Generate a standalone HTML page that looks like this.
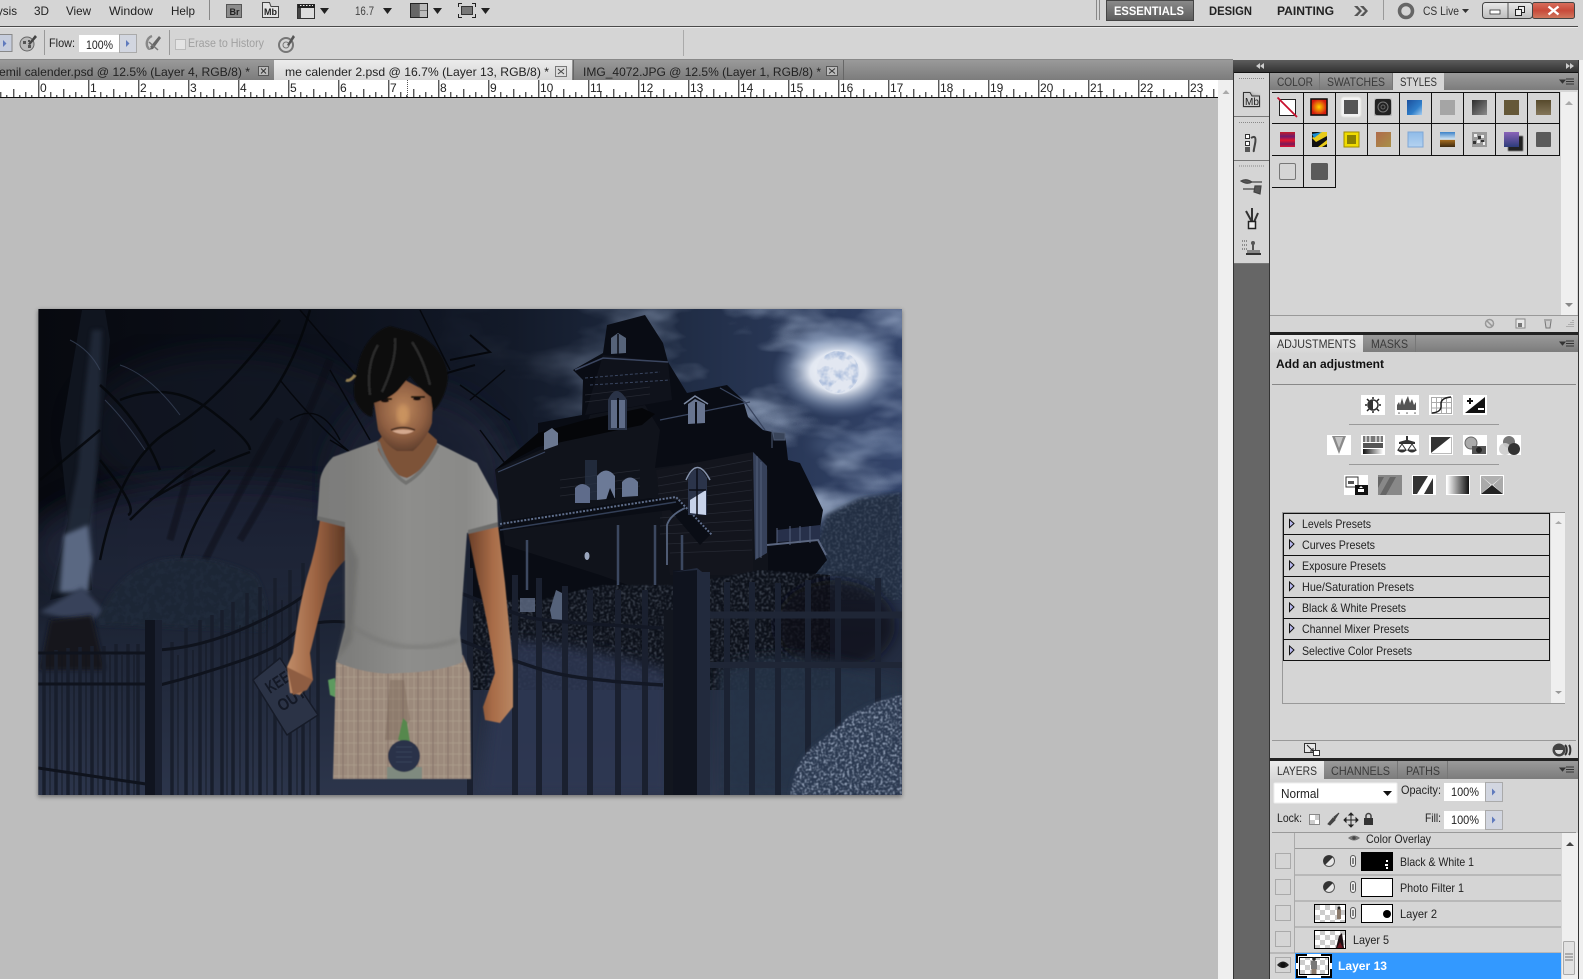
<!DOCTYPE html>
<html><head><meta charset="utf-8"><title>Photoshop</title>
<style>
html,body{margin:0;padding:0;background:#d5d5d5;overflow:hidden}
svg{display:block}
text{font-family:"Liberation Sans",sans-serif;font-size:12px;fill:#222}
.b{font-weight:bold}
.r{font-size:12px;fill:#111}
</style></head><body>
<svg width="1583" height="979" viewBox="0 0 1583 979" xmlns="http://www.w3.org/2000/svg">
<defs>
<linearGradient id="tabg" x1="0" y1="0" x2="0" y2="1"><stop offset="0" stop-color="#9a9a9a"/><stop offset="1" stop-color="#7c7c7c"/></linearGradient>
<linearGradient id="tabl" x1="0" y1="0" x2="0" y2="1"><stop offset="0" stop-color="#ececec"/><stop offset="1" stop-color="#d6d6d6"/></linearGradient>
<linearGradient id="bar" x1="0" y1="0" x2="0" y2="1"><stop offset="0" stop-color="#5c5c5c"/><stop offset="1" stop-color="#333"/></linearGradient>
<linearGradient id="ess" x1="0" y1="0" x2="0" y2="1"><stop offset="0" stop-color="#8a8a8a"/><stop offset="1" stop-color="#5c5c5c"/></linearGradient>
<linearGradient id="win" x1="0" y1="0" x2="0" y2="1"><stop offset="0" stop-color="#e9e9e9"/><stop offset="1" stop-color="#bdbdbd"/></linearGradient>
<linearGradient id="red" x1="0" y1="0" x2="0" y2="1"><stop offset="0" stop-color="#d8705e"/><stop offset=".5" stop-color="#c84a3a"/><stop offset="1" stop-color="#d07a60"/></linearGradient>
<linearGradient id="gh" x1="0" y1="0" x2="1" y2="0"><stop offset="0" stop-color="#fff"/><stop offset="1" stop-color="#111"/></linearGradient>
<pattern id="rul" x="38.3" y="80" width="50" height="18" patternUnits="userSpaceOnUse">
<path d="M.5 0V18M25.5 9V18M12.5 12V18M37.5 12V18M6.5 15V18M18.5 15V18M31.5 15V18M43.5 15V18" stroke="#111" stroke-width="1" fill="none"/>
</pattern>
<pattern id="chk" width="10" height="10" patternUnits="userSpaceOnUse"><rect width="10" height="10" fill="#fff"/><rect width="5" height="5" fill="#ccc"/><rect x="5" y="5" width="5" height="5" fill="#ccc"/></pattern>
<pattern id="plaid" width="15" height="22" patternUnits="userSpaceOnUse"><rect width="15" height="22" fill="#9c8a7b"/><path d="M3 0V22M9 0V22" stroke="#a99889" stroke-width="1"/><path d="M0 6H15M0 17H15" stroke="#b3a395" stroke-width=".8" opacity=".7"/><path d="M13 0V22" stroke="#86746a" stroke-width="1"/></pattern>
<clipPath id="img"><rect x="38.4" y="309" width="863.6" height="486"/></clipPath>
<filter id="clouds" x="0" y="0" width="100%" height="100%"><feTurbulence type="fractalNoise" baseFrequency="0.009 0.02" numOctaves="4" seed="7"/><feColorMatrix values="0 0 0 0 .44  0 0 0 0 .54  0 0 0 0 .72  2.2 0 0 0 -.92"/></filter>
<filter id="fol" x="0" y="0" width="100%" height="100%"><feTurbulence type="fractalNoise" baseFrequency="0.42" numOctaves="2" seed="4"/><feColorMatrix values="0 0 0 0 .55  0 0 0 0 .64  0 0 0 0 .8  4 0 0 0 -1.9"/><feComposite in2="SourceAlpha" operator="in"/><feGaussianBlur stdDeviation=".4"/></filter>
<filter id="foldk" x="0" y="0" width="100%" height="100%"><feTurbulence type="fractalNoise" baseFrequency="0.16" numOctaves="3" seed="9"/><feColorMatrix values="0 0 0 0 .02  0 0 0 0 .03  0 0 0 0 .06  5 0 0 0 -2.2"/><feComposite in2="SourceAlpha" operator="in"/></filter>
<filter id="moon" x="0" y="0" width="100%" height="100%"><feTurbulence type="fractalNoise" baseFrequency="0.1" numOctaves="3" seed="2"/><feColorMatrix values="0 0 0 0 .42  0 0 0 0 .52  0 0 0 0 .72  3.4 0 0 0 -1.5"/><feComposite in2="SourceAlpha" operator="in"/></filter>
<filter id="b2"><feGaussianBlur stdDeviation="2"/></filter>
<filter id="b6"><feGaussianBlur stdDeviation="6"/></filter>
<filter id="b14"><feGaussianBlur stdDeviation="14"/></filter>
<filter id="b05"><feGaussianBlur stdDeviation=".6"/></filter>
<filter id="sd" x="-5%" y="-5%" width="110%" height="110%"><feDropShadow dx="0" dy="1" stdDeviation="2" flood-color="#000" flood-opacity=".45"/></filter>
<linearGradient id="sky" x1="0" y1="0" x2="1" y2="0"><stop offset="0" stop-color="#07090f"/><stop offset=".3" stop-color="#0c101a"/><stop offset=".55" stop-color="#131a29"/><stop offset=".72" stop-color="#1e2a41"/><stop offset="1" stop-color="#33446a"/></linearGradient>
<linearGradient id="low" x1="0" y1="0" x2="0" y2="1"><stop offset="0" stop-color="#242c3e" stop-opacity="0"/><stop offset=".45" stop-color="#20283a" stop-opacity=".9"/><stop offset="1" stop-color="#2c354b"/></linearGradient>
<linearGradient id="fadeL" x1="0" y1="0" x2="1" y2="0"><stop offset="0" stop-color="#000"/><stop offset=".25" stop-color="#333"/><stop offset=".7" stop-color="#fff"/></linearGradient>
<mask id="mskCl"><rect x="420" y="309" width="482" height="260" fill="url(#fadeL)"/></mask>
<radialGradient id="halo"><stop offset="0" stop-color="#fff"/><stop offset=".42" stop-color="#e8edf6" stop-opacity=".95"/><stop offset=".7" stop-color="#9fb0cc" stop-opacity=".55"/><stop offset="1" stop-color="#5d7299" stop-opacity="0"/></radialGradient>
<linearGradient id="shirt" x1="0" y1="0" x2="1" y2="0"><stop offset="0" stop-color="#7c7c7a"/><stop offset=".18" stop-color="#7e7e7c"/><stop offset=".5" stop-color="#8e8e8c"/><stop offset=".82" stop-color="#8a8a88"/><stop offset="1" stop-color="#9a9a98"/></linearGradient>
<linearGradient id="armL" x1="0" y1="0" x2="1" y2="0"><stop offset="0" stop-color="#c08c68"/><stop offset=".5" stop-color="#9c6342"/><stop offset="1" stop-color="#5e3925"/></linearGradient>
<linearGradient id="armR" x1="0" y1="0" x2="1" y2="0"><stop offset="0" stop-color="#6a3f28"/><stop offset=".55" stop-color="#a86c48"/><stop offset="1" stop-color="#b98662"/></linearGradient>
<radialGradient id="face" cx=".5" cy=".42" r=".62"><stop offset="0" stop-color="#bd875c"/><stop offset=".6" stop-color="#8f5f42"/><stop offset="1" stop-color="#5a3b2a"/></radialGradient>
</defs>

<!-- chrome -->
<rect width="1583" height="979" fill="#d5d5d5"/>
<rect x="0" y="98" width="1218" height="881" fill="#bdbdbd"/>
<rect x="0" y="26" width="1578" height="1" fill="#4a4a4a"/>
<rect x="0" y="27" width="1578" height="1" fill="#ececec"/>
<rect x="0" y="59" width="1233" height="1" fill="#888"/>

<!-- menu -->
<text x="-3" y="15" textLength="20" lengthAdjust="spacingAndGlyphs">ysis</text>
<text x="34" y="15" textLength="15" lengthAdjust="spacingAndGlyphs">3D</text>
<text x="66" y="15" textLength="25" lengthAdjust="spacingAndGlyphs">View</text>
<text x="109" y="15" textLength="44" lengthAdjust="spacingAndGlyphs">Window</text>
<text x="171" y="15" textLength="24" lengthAdjust="spacingAndGlyphs">Help</text>
<rect x="209" y="0" width="1" height="20" fill="#888"/>
<rect x="226.500" y="4.500" width="15" height="13" fill="#8c8c8c" stroke="#555"/><text x="229.500" y="15" style="font-size:9px;font-weight:bold">Br</text>
<path d="M262.500 4.500V17.500H278.500V6.500H271L269.500 2.500H262.500Z" fill="#e3e3e3" stroke="#444"/><text x="264" y="15" style="font-size:9px;font-weight:bold">Mb</text>
<rect x="297.500" y="4.500" width="17" height="14" fill="#ddd" stroke="#333"/><rect x="298" y="4" width="17" height="4" fill="#222"/><path d="M300 5.500H313" stroke="#eee" stroke-dasharray="1.500 1.500"/><rect x="298" y="8" width="3" height="10" fill="#444"/>
<path d="M320 8H329L324.500 14Z" fill="#222"/>
<text x="355" y="15" textLength="19" lengthAdjust="spacingAndGlyphs" style="fill:#444">16.7</text>
<path d="M383 8H392L387.500 14Z" fill="#222"/>
<rect x="410.500" y="3.500" width="17" height="14" fill="#777" stroke="#222"/><rect x="420" y="4" width="7" height="6" fill="#bbb"/><rect x="420" y="11" width="7" height="6" fill="#bbb"/><rect x="411" y="4" width="8" height="13" fill="#666"/>
<path d="M433 8H442L437.500 14Z" fill="#222"/>
<path d="M458.500 7V3.500H462M472 3.500H475.500V7M458.500 14V17.500H462M472 17.500H475.500V14" stroke="#222" fill="none"/>
<rect x="461.500" y="6.500" width="11" height="8" fill="#777" stroke="#333"/>
<path d="M481 8H490L485.500 14Z" fill="#222"/>

<path d="M1096.500 0V20M1099.500 0V20" stroke="#888" stroke-width="1"/>
<rect x="1106.500" y=".5" width="87" height="20" fill="url(#ess)" stroke="#444"/>
<text class="b" x="1114" y="15" textLength="70" lengthAdjust="spacingAndGlyphs" style="fill:#fff">ESSENTIALS</text>
<text class="b" x="1209" y="15" textLength="43" lengthAdjust="spacingAndGlyphs">DESIGN</text>
<text class="b" x="1277" y="15" textLength="57" lengthAdjust="spacingAndGlyphs">PAINTING</text>
<path d="M1354 6L1359 11L1354 16H1357.500L1362 11L1357.500 6ZM1360 6L1365 11L1360 16H1363.500L1368 11L1363.500 6Z" fill="#555"/>
<rect x="1383" y="0" width="1" height="20" fill="#999"/>
<circle cx="1406" cy="11" r="6.500" fill="none" stroke="#666" stroke-width="3.500"/>
<text x="1423" y="15" textLength="36" lengthAdjust="spacingAndGlyphs" style="fill:#333">CS Live</text>
<path d="M1462 9H1469L1465.500 13Z" fill="#333"/>
<rect x="1482.500" y="2.500" width="50" height="16" rx="3" fill="url(#win)" stroke="#444"/>
<path d="M1508 3V18" stroke="#555"/>
<rect x="1532.500" y="2.500" width="42" height="16" rx="2" fill="url(#red)" stroke="#444"/>
<rect x="1490" y="10" width="10" height="4" fill="#fff" stroke="#333" stroke-width=".8"/>
<path d="M1515.500 9.500H1521.500V15.500H1515.500ZM1518.500 9V6.500H1524.500V12.500H1522" fill="#eee" stroke="#222"/>
<path d="M1548.500 6.500L1553.500 10.500L1558.500 6.500M1548.500 14.500L1553.500 10.500L1558.500 14.500" stroke="#fff" stroke-width="2.400" fill="none"/>

<!-- options bar -->
<rect x="-2" y="34.500" width="14" height="17" fill="#c6cddd" stroke="#888"/>
<path d="M3 40L6.500 43.500L3 47Z" fill="#5f7abd"/>
<circle cx="27" cy="44" r="7" fill="#bbb" stroke="#666"/><path d="M23 41h3v3h-3zM28 45h3v3h-3zM28 40h2v2h-2z" fill="#555"/>
<path d="M28 44L35 35L37 37L30 45Z" fill="#444"/>
<rect x="44" y="30" width="1" height="25" fill="#999"/>
<text x="49" y="47" textLength="26" lengthAdjust="spacingAndGlyphs">Flow:</text>
<rect x="79" y="35" width="40" height="17" fill="#fff"/><rect x="119.500" y="34.500" width="17" height="18" fill="#d2d6e0" stroke="#aaa"/>
<path d="M126 40L129.500 43.500L126 47Z" fill="#5f7abd"/>
<text x="86" y="49" textLength="27" lengthAdjust="spacingAndGlyphs">100%</text>
<path d="M152 36a8 8 0 0 0 -3 13" stroke="#888" stroke-width="2.500" fill="none"/>
<path d="M150 47L159 36L161 38L153 49ZM148 50L152 47L153 49Z" fill="#666"/><path d="M149 42L158 50" stroke="#777" stroke-width="1.500"/>
<rect x="169" y="30" width="1" height="25" fill="#999"/>
<rect x="175.500" y="39.500" width="10" height="10" fill="#e4e4e4" stroke="#bbb"/>
<text x="188" y="47" textLength="76" lengthAdjust="spacingAndGlyphs" style="fill:#a0a0a0">Erase to History</text>
<circle cx="286" cy="45" r="7" fill="none" stroke="#777" stroke-width="2"/><circle cx="286" cy="45" r="3" fill="none" stroke="#777"/>
<path d="M287 45L293 35L295 37L289 46Z" fill="#555"/>
<rect x="683" y="30" width="1" height="26" fill="#aaa"/>

<!-- doc tabs -->
<rect x="0" y="60" width="1233" height="20" fill="url(#tabg)"/>
<rect x="274" y="60" width="298" height="20" fill="url(#tabl)"/>
<rect x="573" y="60" width="1" height="20" fill="#666"/>
<rect x="843" y="60" width="1" height="20" fill="#666"/>
<text x="-1" y="76" textLength="251" lengthAdjust="spacingAndGlyphs">emil calender.psd @ 12.5% (Layer 4, RGB/8) *</text>
<rect x="258.500" y="66.500" width="10" height="9" fill="#bbb" stroke="#555"/><path d="M261 68.500L266 73.500M266 68.500L261 73.500" stroke="#333"/>
<text x="285" y="76" textLength="264" lengthAdjust="spacingAndGlyphs">me calender 2.psd @ 16.7% (Layer 13, RGB/8) *</text>
<rect x="555.500" y="66.500" width="11" height="10" fill="#ddd" stroke="#777"/><path d="M558 69L564 74M564 69L558 74" stroke="#444"/>
<text x="583" y="76" textLength="238" lengthAdjust="spacingAndGlyphs">IMG_4072.JPG @ 12.5% (Layer 1, RGB/8) *</text>
<rect x="826.500" y="66.500" width="11" height="9" fill="#bbb" stroke="#555"/><path d="M829 68.500L835 73.500M835 68.500L829 73.500" stroke="#333"/>

<!-- ruler -->
<rect x="0" y="80" width="1218" height="18" fill="#fff"/>
<rect x="0" y="80" width="1218" height="18" fill="url(#rul)"/>
<rect x="0" y="97" width="1218" height="1" fill="#111"/>
<path d="M407.500 80V97" stroke="#555" stroke-dasharray="1 1"/>
<g class="r">
<text x="40" y="92">0</text><text x="90" y="92">1</text><text x="140" y="92">2</text><text x="190" y="92">3</text><text x="240" y="92">4</text><text x="290" y="92">5</text><text x="340" y="92">6</text><text x="390" y="92">7</text><text x="440" y="92">8</text><text x="490" y="92">9</text><text x="540" y="92">10</text><text x="590" y="92">11</text><text x="640" y="92">12</text><text x="690" y="92">13</text><text x="740" y="92">14</text><text x="790" y="92">15</text><text x="840" y="92">16</text><text x="890" y="92">17</text><text x="940" y="92">18</text><text x="990" y="92">19</text><text x="1040" y="92">20</text><text x="1090" y="92">21</text><text x="1140" y="92">22</text><text x="1190" y="92">23</text>
</g>

<!-- canvas scrollbar + doc shadow -->
<rect x="1218" y="80" width="15" height="899" fill="#efefef"/>
<path d="M1222.500 94L1226 90L1229.500 94Z" fill="#aaa"/>
<rect x="38" y="310" width="864" height="487" fill="#000" opacity=".4" filter="url(#b2)"/>

<!-- IMAGE -->
<g clip-path="url(#img)">
<rect x="38" y="309" width="864" height="486" fill="url(#sky)"/>
<rect x="420" y="309" width="482" height="260" filter="url(#clouds)" mask="url(#mskCl)"/>
<ellipse cx="838" cy="372" rx="66" ry="46" fill="url(#halo)"/>
<circle cx="838" cy="372" r="22" fill="#e2e7f1" filter="url(#b05)"/>
<circle cx="838" cy="372" r="21" fill="#fff" filter="url(#moon)"/>
<ellipse cx="880" cy="445" rx="70" ry="12" fill="#6a7fa3" opacity=".3" filter="url(#b6)"/>
<ellipse cx="230" cy="430" rx="150" ry="80" fill="#161d2c" opacity=".55" filter="url(#b14)"/>
<ellipse cx="230" cy="550" rx="200" ry="70" fill="#1c2434" opacity=".9" filter="url(#b14)"/>
<ellipse cx="420" cy="480" rx="90" ry="90" fill="#1c2434" opacity=".7" filter="url(#b14)"/>
<rect x="38" y="500" width="864" height="295" fill="url(#low)"/>

<!-- bare bushes right -->
<path d="M805 585L826 515L860 498L902 492V600H805Z" fill="#222d42" filter="url(#b2)"/>
<path d="M805 585L826 515L860 498L902 492V600H805Z" fill="#fff" filter="url(#fol)" opacity=".18"/>

<!-- trees -->
<path d="M105 310L110 340L98 470L88 533L92 590L50 600L68 520L60 440L82 310Z" fill="#10151f"/>
<path d="M92 330L84 400L78 470L64 540L52 592L78 595L93 560L92 520L96 470L100 400L102 330Z" fill="#2b3447" opacity=".6" filter="url(#b2)"/>
<path d="M60 592L64 535L88 525L92 560L88 592Z" fill="#5a6882" filter="url(#b2)"/>
<path d="M40 612L82 587L105 612L90 622L60 617Z" fill="#37425a" filter="url(#b2)"/>
<path d="M50 620L40 670H105L92 615Z" fill="#12161f" filter="url(#b2)"/>
<path d="M100 560Q120 460 170 430T280 320M120 400Q170 380 210 410T250 450M100 385Q140 420 160 470M230 470Q180 530 170 610M250 420Q290 380 310 310M150 500Q200 470 250 452M40 480L100 430M100 460Q140 510 128 515M215 450Q170 480 130 520" stroke="#05070b" stroke-width="2.500" fill="none" opacity=".85"/>
<path d="M280 420Q250 470 205 560M330 360Q300 440 240 540M190 470L170 540" stroke="#080b12" stroke-width="7" fill="none" opacity=".5" filter="url(#b05)"/>
<path d="M105 400Q125 420 145 450M120 365Q150 375 180 415M70 340Q90 350 100 370" stroke="#3d4860" stroke-width="1" fill="none" opacity=".7"/>
<path d="M280 380Q320 430 360 460M290 420Q320 400 340 440M330 370L370 440M300 310L360 380M330 440L380 470M420 310L450 370M460 385L510 420M505 370L470 400M480 430L510 470" stroke="#05070c" stroke-width="1.400" fill="none"/>
<path d="M440 375L475 365M470 335L490 352L450 360" stroke="#05070c" stroke-width="2" fill="none"/>

<!-- bush left -->
<path d="M97 625Q110 575 160 560Q210 552 255 575Q270 600 265 630Z" fill="#1e2636" filter="url(#b2)"/>
<path d="M97 625Q110 575 160 560Q210 552 255 575Q270 600 265 630Z" fill="#fff" filter="url(#foldk)" opacity=".35"/>

<!-- house -->
<path d="M495 470L538 433L538 423L582 415L583 380L573 370L603 353L607 325L645 315L663 343L668 362L687 393L727 385L743 400L748 417L763 430L772 432L785 433L788 460L800 463L823 510L818 540L827 560L813 577L800 690H470V540L505 525L500 490Z" fill="#090c14"/>
<path d="M603 355L668 362L672 400L585 415Z" fill="#0f121b"/>
<path d="M495 470L585 430L590 415L645 405L660 430L655 468L730 458L753 452L768 470L768 600L670 600L600 575L505 545Z" fill="#10131b"/>
<path d="M656 470L753 452V575H670Z" fill="#13151d"/>
<g stroke="#262933" stroke-width=".8" fill="none"><path d="M658 478L752 460M658 486L752 470M658 494L752 480M658 502L752 490M660 510L752 500M660 518L752 510M660 526L752 520M660 534L752 530M666 544L752 540M670 553L752 550M560 480L640 470M560 488L640 478M560 496L640 486M585 395L650 387M585 402L650 394"/></g>
<path d="M753 452L767 466V553L755 560Z" fill="#36415a"/>
<path d="M757 456V558M761 462V558" stroke="#5a6883" stroke-width=".8"/>
<path d="M495 470L538 447L642 425L655 414L642 408L585 420L538 433Z" fill="#050609"/>
<path d="M575 370L603 358L668 362" stroke="#3b4660" stroke-width="1.500" fill="none"/>
<path d="M498 472L545 452M660 420L750 402M720 388L745 402L765 430" stroke="#39455f" stroke-width="1.200" fill="none"/>
<path d="M585 378L660 372M590 385L670 380" stroke="#39455f" stroke-width="1" stroke-dasharray="3 2" fill="none"/>
<path d="M510 520L650 498L680 500L712 533L700 545L670 510L510 530Z" fill="#0a0d15"/>
<path d="M500 524L676 497L712 535" stroke="#5f6e8b" stroke-width="2" stroke-dasharray="2 1.500" fill="none"/>
<path d="M500 530L676 502" stroke="#333f57" stroke-width="1.500" fill="none"/>
<path d="M667 565V525Q670 515 685 508" stroke="#55637d" stroke-width="1.800" fill="none"/>
<path d="M527 540V590M618 525V590M655 525V590M682 535V570M480 545V585" stroke="#3c4860" stroke-width="2.500"/>
<rect x="585" y="460" width="12" height="40" fill="#2a3449" opacity=".7"/>
<!-- windows -->
<path d="M688 515V478Q697 460 707 478V515Z" fill="#2b344a"/><path d="M690 513V500L706 490V515Z" fill="#c8d3ea"/><path d="M697 468V515M689 490H706" stroke="#0a0d16" stroke-width="1.500"/><path d="M686 480Q697 455 710 480" stroke="#8693ad" stroke-width="1.500" fill="none"/>
<path d="M608 430V400Q616 382 627 400V430Z" fill="#2a3347"/><path d="M611 428V400H625V428Z" fill="#5f6c88"/><path d="M618 398V428" stroke="#0a0d16" stroke-width="2"/>
<path d="M688 424V404L695 399L705 404V423Z" fill="#687590"/><path d="M696 402V424" stroke="#0a0d16" stroke-width="2"/><path d="M684 404L695 396L708 404" stroke="#7d8aa2" stroke-width="1.500" fill="none"/>
<path d="M611 354V338L618 333L626 338V353Z" fill="#566379"/><path d="M618 334V354" stroke="#0a0d16" stroke-width="1.500"/>
<path d="M544 450V433L552 428L558 433V445Z" fill="#6b7891"/>
<path d="M575 503V488Q582 480 590 488V503Z" fill="#5f6c8b"/><path d="M597 500V476Q606 465 615 476V498Z" fill="#6c7a97"/><path d="M622 497V482Q630 473 638 482V496Z" fill="#687693"/>
<path d="M606 500L610 488L615 499Z" fill="#0a0d16"/>
<path d="M777 530L820 525V540L777 542Z" fill="#27304a"/><path d="M777 528V545M790 526V545M800 526V543M810 526V543" stroke="#56627e" stroke-width="1"/><path d="M767 545L818 540L826 555" stroke="#5a6680" stroke-width="2" fill="none"/>
<path d="M785 440H774L773 432L785 433ZM772 448V430" stroke="#4d5a73" stroke-width="1" fill="#394459"/>
<ellipse cx="587" cy="556" rx="2.500" ry="4" fill="#9aa6bd"/>
<!-- house-level foliage -->
<path d="M470 600L540 600L600 585L680 585L760 570L830 575L830 690H470Z" fill="#0c1019"/>
<path d="M470 600L540 600L600 585L680 585L760 570L830 575L830 690H470Z" fill="#fff" filter="url(#fol)" opacity=".28"/>
<path d="M550 610L556 590L566 595L562 620H552Z" fill="#55627a"/>
<path d="M520 598H535V612H520Z" fill="#5f6c85" opacity=".8"/>
<path d="M500 640Q560 640 670 670V795H480Z" fill="#2d3953" opacity=".85" filter="url(#b6)"/>
<ellipse cx="835" cy="625" rx="60" ry="45" fill="#0b0f18" opacity=".7" filter="url(#b6)"/>
<path d="M720 670Q780 640 902 680V795H720Z" fill="#283449" opacity=".85" filter="url(#b6)"/>
<path d="M720 670H902V795H720Z" fill="#fff" filter="url(#foldk)" opacity=".28"/>

<!-- fence -->
<g fill="none" stroke="#181e2c">
<path stroke-width="3.500" d="M44 652V795M56 650V795M68 648V795M80 647V795M92 646V795M104 646V795M116 644V795M128 644V795M138 644V795"/>
<path stroke-width="3.500" d="M172 642V795M186 628V795M200 620V795M212 615V795M222 610V795M233 602V795M247 593V795M260 587V795M275 578V795M290 570V795M303 563V795M318 562V795"/>
<path stroke-width="1.500" stroke="#0f131d" opacity=".5" d="M50 655V795M62 655V795M74 655V795M86 655V795M98 655V795M110 655V795M122 655V795M134 655V795M178 655V795M193 650V795M206 640V795M227 635V795M240 625V795M253 620V795M267 610V795M282 600V795M297 600V795M310 600V795"/>
<path stroke-width="6" stroke="#1a202f" d="M470 568V795M515 575V795M539 578V795M565 586V795M590 590V795M618 590V795M645 590V795"/>
<path stroke-width="6" stroke="#1b2232" d="M727 582V795M752 582V795M778 583V795M808 580V795M838 578V795M878 578V795"/>
<path stroke-width="3" stroke="#0f131d" d="M38 653H146M38 684H146M38 768L146 784"/>
<path stroke-width="3" stroke="#0f131d" d="M157 650Q200 648 247 627T310 590M160 685Q200 675 243 660T300 627Q320 620 345 622"/>
<path stroke-width="3.500" stroke="#131825" d="M460 593Q510 612 527 617T663 628"/>
<path stroke-width="3.500" stroke="#131825" d="M460 640Q510 660 543 670T663 685"/>
<path stroke-width="7" stroke="#1f2636" d="M705 615H902"/>
<path stroke-width="6" stroke="#1f2636" d="M705 665H902"/>
</g>
<rect x="145" y="620" width="17" height="175" fill="#10141f"/><rect x="155" y="620" width="7" height="175" fill="#1a2030"/>
<rect x="664" y="610" width="10" height="185" fill="#12161f"/>
<rect x="673" y="570" width="24" height="225" fill="#0f131e"/><path d="M673 572L697 568L710 578V795H697V570" fill="#232b3e"/><rect x="697" y="572" width="13" height="223" fill="#222a3d"/>

<!-- sign -->
<path d="M280 658L253 680L287 735L318 715Z" fill="#2b3346" stroke="#161b28" stroke-width="1.500" stroke-linejoin="round"/>
<text transform="translate(270 694) rotate(-33)" textLength="34" lengthAdjust="spacingAndGlyphs" style="font-size:17px;font-weight:bold;fill:#141926">KEEP</text>
<text transform="translate(282 712) rotate(-33)" textLength="30" lengthAdjust="spacingAndGlyphs" style="font-size:17px;font-weight:bold;fill:#141926">OUT</text>

<!-- bottom right bush -->
<path d="M790 795Q795 760 815 745T850 715Q875 700 902 695V795Z" fill="#2c3950" filter="url(#b2)"/>
<path d="M790 795Q795 760 815 745T850 715Q875 700 902 695V795Z" fill="#fff" filter="url(#fol)" opacity=".7"/>

<!-- MAN -->
<g filter="url(#b05)">
<path d="M328 680L335 678L337 698L330 695Z" fill="#5d9a5e"/>
<path d="M336 660L463 655L470 673L471 779H333Z" fill="url(#plaid)"/>
<path d="M390 680L404 680L410 720L398 740H385Z" fill="#6d5b4d" opacity=".3"/>
<path d="M398 740L403 718L407 722L410 742Z" fill="#57884e"/>
<path d="M387 767H422V779H387Z" fill="#7f8a7f"/>
<circle cx="404" cy="756" r="16" fill="#2a3348"/>
<path d="M396 747H412M396 752H412M396 757H412M396 762H412" stroke="#3c475d" stroke-width=".7"/>
<!-- arms -->
<path d="M320 520L345 527L345 560Q335 570 328 583Q318 620 310 653L313 680L300 695L290 693L287 667L293 653Q298 610 307 577Q316 550 320 520Z" fill="url(#armL)"/>
<path d="M468 532L498 525L505 583L513 667L513 707L500 723L485 720L483 707L495 673Q488 620 477 577Z" fill="url(#armR)"/>
<path d="M287 667L313 680L307 690L293 695Z" fill="#8e5d42"/>
<!-- shirt -->
<path d="M380 440L333 457Q322 468 320 480L317 520L345 527L345 560V627L336 662Q370 676 400 673Q440 672 463 662L460 633L467 533L498 527L497 500L477 463L437 443Q420 470 407 475Q390 468 380 440Z" fill="url(#shirt)"/>
<path d="M345 530V625L337 660L352 640L358 560Z" fill="#636362" opacity=".5" filter="url(#b2)"/>
<path d="M317 516L345 522V527L317 520ZM468 530L498 522V527L468 534Z" fill="#6c6c6a"/>
<path d="M350 625Q400 660 458 640" stroke="#777775" stroke-width="3" fill="none" filter="url(#b2)"/>
<!-- neck -->
<path d="M378 441L378 450Q390 475 407 478Q425 470 437 447L437 440L420 425H392Z" fill="#7d5239"/>
<path d="M378 442Q388 472 406 483Q425 472 438 445" stroke="#727270" stroke-width="3.500" fill="none"/>
<!-- face -->
<path d="M373 395L378 430Q385 445 397 451L413 451Q426 440 432 423L433 395L405 380Z" fill="url(#face)"/>
<ellipse cx="403" cy="415" rx="6" ry="10" fill="#c9935f" filter="url(#b2)"/>
<path d="M379 399L392 399M411 397L425 397" stroke="#1a1210" stroke-width="2"/>
<ellipse cx="385" cy="401" rx="4" ry="1.500" fill="#15100d"/><ellipse cx="417" cy="399" rx="4" ry="1.500" fill="#15100d"/>
<path d="M392 431Q403 428 414 431Q404 437 392 431Z" fill="#d4a98e"/><path d="M391 430Q403 425 415 430" stroke="#3a251c" stroke-width="1.400" fill="none"/>
<!-- hair -->
<path d="M390 326C375 330 362 345 358 365C354 380 352 395 356 402C360 410 366 416 372 417L374 403C380 401 392 398 400 388C405 382 408 378 410 376C416 384 424 392 431 397L433 412C440 405 447 392 448 377C447 360 437 342 412 332Z" fill="#0d0d0d"/>
<path d="M378 345Q366 365 370 395M395 338Q397 360 382 392M412 342Q424 360 430 385" stroke="#2e2e2e" stroke-width="2.500" fill="none" filter="url(#b05)"/>
<path d="M355 375Q350 382 346 380" stroke="#8f7c50" stroke-width="3"/>
</g>
</g>

<!-- PANELS -->
<rect x="1233" y="60" width="345" height="12" fill="url(#bar)"/>
<path d="M1264 63V69L1260 66ZM1260 63V69L1256 66Z" fill="#ccc"/>
<path d="M1570 63V69L1574 66ZM1566 63V69L1570 66Z" fill="#ccc"/>
<rect x="1233" y="72" width="345" height="1" fill="#111"/>
<rect x="1578" y="60" width="1" height="919" fill="#333"/>
<rect x="1579" y="60" width="4" height="919" fill="#efefef"/>
<rect x="1233" y="72" width="1" height="907" fill="#333"/>
<rect x="1234" y="73" width="35" height="906" fill="#666"/>
<rect x="1234" y="73" width="35" height="43" fill="#d5d5d5"/>
<rect x="1234" y="117" width="35" height="43" fill="#d5d5d5"/>
<rect x="1234" y="161" width="35" height="102" fill="#d5d5d5"/>
<rect x="1234" y="116" width="35" height="1" fill="#777"/><rect x="1234" y="160" width="35" height="1" fill="#777"/><rect x="1234" y="263" width="35" height="1" fill="#777"/>
<path d="M1239 78.500H1264M1239 122.500H1264M1239 166H1264" stroke="#888" stroke-dasharray="1 1"/>
<!-- dock icons -->
<path d="M1243.500 92.500V106.500H1259.500V96H1252L1250 92.500Z" fill="#ccc" stroke="#333" filter="url(#sd)"/><text x="1245" y="105" style="font-size:10px">Mb</text>
<rect x="1245.500" y="134.500" width="4" height="4" fill="#fff" stroke="#333"/><rect x="1245.500" y="141.500" width="4" height="4" fill="#fff" stroke="#333"/><rect x="1245" y="147" width="5" height="5" fill="#555"/>
<path d="M1251 138Q1257 134 1255 144T1254 150" stroke="#444" stroke-width="2" fill="none"/>
<path d="M1241 181Q1246 178 1252 182Q1247 185 1241 181ZM1252 182H1262M1243 189H1254M1255 186L1261 186L1260 194L1254 192Z" stroke="#444" stroke-width="1.200" fill="#555"/>
<path d="M1246 211L1252 222M1252 208V222M1258 213L1254 222" stroke="#333" stroke-width="2"/><rect x="1248.500" y="221.500" width="7" height="7" fill="#eee" stroke="#222" stroke-width="1.500"/>
<path d="M1242 241H1248M1242 245H1248M1242 249H1248" stroke="#444" stroke-dasharray="1 1"/><circle cx="1253" cy="243" r="2" fill="#555"/><rect x="1252" y="244" width="2" height="6" fill="#555"/><rect x="1247" y="250" width="13" height="3" fill="#888"/><rect x="1246" y="253" width="15" height="2" fill="#333"/>

<!-- panel 1 -->
<rect x="1270" y="73" width="308" height="259" fill="#d5d5d5"/>
<rect x="1269" y="73" width="1" height="906" fill="#333"/>
<rect x="1270" y="73" width="308" height="17" fill="url(#tabg)"/>
<rect x="1319" y="73" width="1" height="17" fill="#777"/><rect x="1392" y="73" width="1" height="17" fill="#777"/>
<rect x="1393" y="73" width="51" height="18" fill="#d5d5d5"/>
<text x="1277" y="86" textLength="36" lengthAdjust="spacingAndGlyphs" style="fill:#3a3a3a">COLOR</text>
<text x="1327" y="86" textLength="58" lengthAdjust="spacingAndGlyphs" style="fill:#3a3a3a">SWATCHES</text>
<text x="1400" y="86" textLength="37" lengthAdjust="spacingAndGlyphs" style="fill:#333">STYLES</text>
<path d="M1560 80H1565L1562.500 83ZM1566 79H1574M1566 81.500H1574M1566 84H1574" fill="#333" stroke="#333"/>
<!-- style grid -->
<path d="M1272 92.500H1560M1272 123.500H1560M1272 155.500H1560M1272 187.500H1336" stroke="#111" fill="none"/>
<path d="M1303.500 92V187M1335.500 92V187M1367.500 92V155M1399.500 92V155M1431.500 92V155M1463.500 92V155M1495.500 92V155M1527.500 92V155M1559.500 92V155" stroke="#111" fill="none"/>
<rect x="1279.500" y="99.500" width="16" height="16" fill="#fff" stroke="#222"/><path d="M1277.500 97.500L1297 117" stroke="#c8102e" stroke-width="1.800"/>
<defs><radialGradient id="fire"><stop offset="0" stop-color="#ffd400"/><stop offset="1" stop-color="#d41a0c"/></radialGradient>
<linearGradient id="s5" x1="0" y1="0" x2="1" y2="1"><stop offset="0" stop-color="#1b4f9c"/><stop offset=".6" stop-color="#2f7ec9"/><stop offset="1" stop-color="#a5cdf0"/></linearGradient>
<linearGradient id="s7" x1="0" y1="0" x2="1" y2="1"><stop offset="0" stop-color="#2d2d2d"/><stop offset="1" stop-color="#8c8c8c"/></linearGradient>
<linearGradient id="s9" x1="0" y1="0" x2="0" y2="1"><stop offset="0" stop-color="#574a2c"/><stop offset="1" stop-color="#84765a"/></linearGradient>
<linearGradient id="s12" x1="0" y1="0" x2="1" y2="1"><stop offset="0" stop-color="#b06b4a"/><stop offset="1" stop-color="#a89048"/></linearGradient>
<linearGradient id="s13" x1="0" y1="0" x2="0" y2="1"><stop offset="0" stop-color="#8fbbe8"/><stop offset="1" stop-color="#b4d2f0"/></linearGradient>
<linearGradient id="s14" x1="0" y1="0" x2="0" y2="1"><stop offset="0" stop-color="#3c82c8"/><stop offset=".5" stop-color="#d8e8f4"/><stop offset=".55" stop-color="#a0691e"/><stop offset="1" stop-color="#3d2a10"/></linearGradient>
<linearGradient id="s16" x1="0" y1="0" x2="0" y2="1"><stop offset="0" stop-color="#8a63b8"/><stop offset="1" stop-color="#2d3c7a"/></linearGradient>
<linearGradient id="s10" x1="0" y1="0" x2="0" y2="1"><stop offset="0" stop-color="#c41a2a"/><stop offset=".3" stop-color="#6d1a6d"/><stop offset=".55" stop-color="#e4162e"/><stop offset=".8" stop-color="#7a1a5a"/><stop offset="1" stop-color="#e01030"/></linearGradient></defs>
<rect x="1311" y="99" width="16" height="16" fill="url(#fire)" stroke="#111" stroke-width="1.500" filter="url(#sd)"/>
<rect x="1341" y="97" width="20" height="20" rx="3" fill="#f2f2f2" stroke="#e4e4e0"/><rect x="1344" y="100" width="14" height="14" fill="#555"/>
<rect x="1375" y="99" width="16" height="16" rx="2" fill="#222" filter="url(#sd)"/><circle cx="1383" cy="107" r="5" fill="none" stroke="#777"/><circle cx="1383" cy="107" r="2" fill="none" stroke="#666"/>
<rect x="1407" y="100" width="15" height="15" fill="url(#s5)"/>
<rect x="1440" y="100" width="15" height="15" fill="#a5a5a5"/>
<rect x="1472" y="100" width="15" height="15" fill="url(#s7)"/>
<rect x="1504" y="100" width="15" height="15" fill="#655838"/>
<rect x="1536" y="100" width="15" height="15" fill="url(#s9)"/>
<rect x="1280" y="132" width="15" height="15" fill="url(#s10)"/>
<rect x="1312" y="132" width="15" height="15" fill="#111"/><path d="M1312 138L1320 132H1327V136L1316 142ZM1318 147L1327 140V144L1322 147Z" fill="#e8cb1a"/><path d="M1312 134L1322 132L1314 138Z" fill="#1a8fd4"/>
<rect x="1344" y="132" width="15" height="15" fill="#f0dc00" stroke="#a08c00"/><rect x="1347" y="135" width="9" height="9" fill="#8a8000"/>
<rect x="1376" y="132" width="15" height="15" fill="url(#s12)"/>
<rect x="1408" y="132" width="15" height="15" fill="url(#s13)" stroke="#7ea7d6"/>
<rect x="1440" y="132" width="15" height="15" fill="url(#s14)"/>
<rect x="1472" y="132" width="15" height="15" fill="#999"/><path d="M1474 134h3v3h-3zM1481 135h3v3h-3zM1477 140h3v3h-3zM1483 142h2v3h-2z" fill="#eee"/><path d="M1478 136h3v3h-3zM1473 141h3v3h-3zM1481 140h3v2h-3z" fill="#333"/>
<rect x="1508" y="136" width="15" height="15" fill="#222" filter="url(#b05)"/><rect x="1504" y="132" width="15" height="15" fill="url(#s16)"/>
<rect x="1536" y="132" width="15" height="15" rx="1" fill="#5a5a5a"/>
<rect x="1279.500" y="163.500" width="16" height="16" rx="1.500" fill="#d5d5d5" stroke="#777"/>
<rect x="1311" y="163" width="17" height="17" rx="1.500" fill="#5a5a5a"/>
<rect x="1561" y="92" width="16" height="223" fill="#efefef"/>
<path d="M1565 105L1569 101L1573 105Z" fill="#aaa"/><path d="M1565 303L1569 307L1573 303Z" fill="#888"/>
<rect x="1270" y="315" width="308" height="1" fill="#999"/>
<circle cx="1489.500" cy="323.500" r="4" fill="none" stroke="#999" stroke-width="1.500"/><path d="M1487 321L1492 326" stroke="#999" stroke-width="1.500"/>
<rect x="1516" y="319" width="9" height="9" fill="#e8e8e8" stroke="#888"/><rect x="1518" y="323" width="4" height="4" fill="#777"/>
<path d="M1544 320H1552M1545 321L1546 328H1550L1551 321" stroke="#777" fill="#ccc"/>
<path d="M1573 320v1M1571 322v1M1573 322v1M1569 324v1M1571 324v1M1573 324v1M1567 326v1M1569 326v1M1571 326v1M1573 326v1" stroke="#888"/>

<!-- adjustments -->
<rect x="1270" y="332" width="308" height="3" fill="#222"/>
<rect x="1270" y="335" width="308" height="17" fill="url(#tabg)"/>
<rect x="1270" y="335" width="93" height="18" fill="url(#tabl)"/>
<rect x="1415" y="335" width="1" height="17" fill="#777"/>
<text x="1277" y="348" textLength="79" lengthAdjust="spacingAndGlyphs" style="fill:#333">ADJUSTMENTS</text>
<text x="1371" y="348" textLength="37" lengthAdjust="spacingAndGlyphs" style="fill:#3a3a3a">MASKS</text>
<path d="M1560 342H1565L1562.500 345ZM1566 341H1574M1566 343.500H1574M1566 346H1574" fill="#333" stroke="#333"/>
<text class="b" x="1276" y="368" textLength="108" lengthAdjust="spacingAndGlyphs" style="fill:#111">Add an adjustment</text>
<rect x="1272" y="384" width="304" height="1" fill="#888"/>
<rect x="1349" y="424" width="150" height="1" fill="#999"/><rect x="1349" y="464" width="150" height="1" fill="#999"/>
<!-- row1 -->
<g>
<rect x="1361" y="395" width="24" height="20" fill="#fff"/><circle cx="1373" cy="405" r="5" fill="#fff" stroke="#333" stroke-width="1.500"/><path d="M1373 400A5 5 0 0 0 1373 410Z" fill="#333"/><path d="M1373 397V399M1373 411V413M1365 405H1367M1379 405H1381M1367 399L1369 401M1377 409L1379 411M1379 399L1377 401M1367 411L1369 409" stroke="#222" stroke-width="1.500"/>
<rect x="1395" y="395" width="24" height="20" fill="#fff"/><path d="M1397 410V405L1399 402L1400 405L1402 398L1404 405L1406 400L1408 396L1410 403L1412 399L1414 405L1416 402V410Z" fill="#555"/><path d="M1399 412l1 1.500h-2zM1407 412l1 1.500h-2zM1415 412l1 1.500h-2z" fill="#333"/>
<rect x="1429" y="395" width="24" height="20" fill="#fff"/><path d="M1431.500 397.500H1451.500V413.500H1431.500ZM1436.500 397.500V413.500M1441.500 397.500V413.500M1446.500 397.500V413.500M1431.500 402.500H1451.500M1431.500 408H1451.500" stroke="#aaa" fill="none"/><path d="M1432 413Q1442 412 1441 405T1451 397" stroke="#222" stroke-width="1.500" fill="none"/>
<rect x="1463" y="395" width="24" height="20" fill="#fff"/><path d="M1465 413L1485 397V413Z" fill="#111"/><path d="M1467 401H1473M1470 398V404" stroke="#111" stroke-width="2"/><path d="M1478 409H1484" stroke="#fff" stroke-width="2"/>
</g>
<!-- row2 -->
<g>
<rect x="1327" y="435" width="24" height="20" fill="#fff"/><path d="M1332 436L1346 436L1339 454Z" fill="#8a8a8a"/><path d="M1335 437L1343 437L1339 448Z" fill="#c4c4c4"/>
<rect x="1361" y="435" width="24" height="20" fill="#fff"/><rect x="1363" y="436" width="20" height="6" fill="#777"/><path d="M1366 436v6M1370 436v6M1376 436v6M1380 436v6" stroke="#ddd" stroke-width="1.500"/><rect x="1363" y="443" width="20" height="5" fill="#555"/><rect x="1363" y="449" width="20" height="5" fill="url(#gh)" transform="rotate(180 1373 451.500)"/>
<rect x="1395" y="435" width="24" height="20" fill="#fff"/><path d="M1406 436H1408V440L1415 442V444H1399V442L1406 440Z" fill="#333"/><path d="M1402 444L1398 450H1406ZM1412 444L1408 450H1416Z" fill="none" stroke="#333"/><path d="M1397 450Q1402 455 1407 450ZM1407 450Q1412 455 1417 450Z" fill="#333"/>
<rect x="1429" y="435" width="24" height="20" fill="#fff"/><path d="M1431 453V437H1451Z" fill="#333"/><path d="M1431.500 453.500H1451.500V437" stroke="#bbb" fill="none"/>
<rect x="1463" y="435" width="24" height="20" fill="#fff"/><circle cx="1471" cy="443" r="6" fill="#aaa" stroke="#666"/><rect x="1472" y="446" width="14" height="8" fill="#555"/><circle cx="1479" cy="450" r="3" fill="#222"/>
<rect x="1497" y="435" width="24" height="20" fill="#fff"/><circle cx="1509" cy="442" r="6" fill="#777"/><circle cx="1505" cy="449" r="6" fill="#ccc" opacity=".9"/><circle cx="1514" cy="449" r="6" fill="#333"/>
</g>
<!-- row3 -->
<g>
<rect x="1344" y="475" width="24" height="20" fill="#fff"/><rect x="1346" y="477" width="12" height="10" fill="#fff" stroke="#333"/><rect x="1348" y="481" width="6" height="3" fill="#555"/><rect x="1355" y="485" width="13" height="10" fill="#111"/><rect x="1358" y="489" width="6" height="3" fill="#fff"/><path d="M1361 486l2 2h-4z" fill="#fff"/>
<rect x="1378" y="475" width="24" height="20" fill="#888"/><path d="M1380 495L1390 477H1396L1386 495ZM1378 477H1384L1378 488Z" fill="#666"/>
<rect x="1412" y="475" width="24" height="20" fill="#fff"/><path d="M1413 476H1428L1417 494H1413ZM1433 478V494H1424Z" fill="#333"/>
<rect x="1446" y="475" width="24" height="20" fill="#fff"/><rect x="1447" y="476" width="22" height="18" fill="url(#gh)"/>
<rect x="1480" y="475" width="24" height="20" fill="#fff"/><path d="M1481 476H1503L1492 485Z" fill="#b0b0b0"/><path d="M1481 494H1503L1492 485Z" fill="#222"/><path d="M1481 476L1491 485L1481 494ZM1503 476L1493 485L1503 494Z" fill="#aaa"/>
</g>

<!-- preset list -->
<rect x="1282.500" y="512.500" width="282" height="191" fill="#d5d5d5" stroke="#999"/>
<rect x="1551" y="513" width="14" height="190" fill="#efefef"/>
<path d="M1555 524L1558.500 521L1562 524Z" fill="#aaa"/><path d="M1555 691L1558.500 694L1562 691Z" fill="#999"/>
<rect x="1283.500" y="513.500" width="266" height="147" fill="none" stroke="#111"/>
<path d="M1284 534.500H1550M1284 555.500H1550M1284 576.500H1550M1284 597.500H1550M1284 618.500H1550M1284 639.500H1550" stroke="#111"/>
<g fill="#b8b8f0" stroke="#111" stroke-width="1">
<path d="M1289.500 519.500V527.500L1294 523.500Z"/><path d="M1289.500 540V548.500L1294 544Z"/><path d="M1289.500 561V569.500L1294 565Z"/><path d="M1289.500 582V590.500L1294 586Z"/><path d="M1289.500 603V611.500L1294 607Z"/><path d="M1289.500 624V632.500L1294 628Z"/><path d="M1289.500 646V654.500L1294 650Z"/>
</g>
<text x="1302" y="528" textLength="69" lengthAdjust="spacingAndGlyphs">Levels Presets</text>
<text x="1302" y="549" textLength="73" lengthAdjust="spacingAndGlyphs">Curves Presets</text>
<text x="1302" y="570" textLength="84" lengthAdjust="spacingAndGlyphs">Exposure Presets</text>
<text x="1302" y="591" textLength="112" lengthAdjust="spacingAndGlyphs">Hue/Saturation Presets</text>
<text x="1302" y="612" textLength="104" lengthAdjust="spacingAndGlyphs">Black &amp; White Presets</text>
<text x="1302" y="633" textLength="107" lengthAdjust="spacingAndGlyphs">Channel Mixer Presets</text>
<text x="1302" y="655" textLength="110" lengthAdjust="spacingAndGlyphs">Selective Color Presets</text>
<rect x="1272" y="740" width="304" height="1" fill="#999"/>
<rect x="1304.500" y="743.500" width="11" height="9" fill="#e8e8e8" stroke="#333"/><path d="M1307 745L1313 751M1313 748V751H1310" stroke="#222" fill="none"/><rect x="1313.500" y="750.500" width="6" height="5" fill="#fff" stroke="#333"/>
<circle cx="1559" cy="750" r="6.500" fill="#444"/><path d="M1565 745a4 6 0 0 1 0 10M1569 745a3 6 0 0 1 0 10" stroke="#333" stroke-width="2" fill="none"/>
<path d="M1555 750a4 4 0 0 0 8 0" fill="#ddd"/>

<!-- layers -->
<rect x="1270" y="758" width="308" height="3" fill="#222"/>
<rect x="1270" y="761" width="308" height="18" fill="url(#tabg)"/>
<rect x="1270" y="761" width="54" height="19" fill="url(#tabl)"/>
<rect x="1397" y="761" width="1" height="18" fill="#777"/><rect x="1447" y="761" width="1" height="18" fill="#777"/>
<text x="1277" y="775" textLength="40" lengthAdjust="spacingAndGlyphs" style="fill:#333">LAYERS</text>
<text x="1331" y="775" textLength="59" lengthAdjust="spacingAndGlyphs" style="fill:#3a3a3a">CHANNELS</text>
<text x="1406" y="775" textLength="34" lengthAdjust="spacingAndGlyphs" style="fill:#3a3a3a">PATHS</text>
<path d="M1560 768H1565L1562.500 771ZM1566 767H1574M1566 769.500H1574M1566 772H1574" fill="#333" stroke="#333"/>
<rect x="1274" y="783" width="123" height="20" rx="1" fill="#fff" stroke="#eee"/>
<text x="1281" y="798" textLength="38" lengthAdjust="spacingAndGlyphs" style="fill:#222;font-size:13px">Normal</text>
<path d="M1383 791H1392L1387.500 796Z" fill="#111"/>
<text x="1401" y="794" textLength="40" lengthAdjust="spacingAndGlyphs">Opacity:</text>
<rect x="1444" y="783" width="41" height="18" fill="#fff"/><rect x="1485.500" y="782.500" width="17" height="19" fill="#d2d6e0" stroke="#aaa"/><path d="M1492 788.500L1495.500 792L1492 795.500Z" fill="#5f7abd"/>
<text x="1451" y="796" textLength="28" lengthAdjust="spacingAndGlyphs">100%</text>
<text x="1277" y="822" textLength="25" lengthAdjust="spacingAndGlyphs">Lock:</text>
<rect x="1309.500" y="814.500" width="10" height="10" fill="url(#chk)" stroke="#888" filter="url(#sd)"/>
<path d="M1328 824L1333 818L1335 820L1330 825ZM1334 817L1339 813L1335 819Z" fill="#444" stroke="#444"/>
<path d="M1351 814V826M1345 820H1357M1351 813l-2 2h4zM1351 827l-2-2h4zM1344 820l2-2v4zM1358 820l-2-2v4z" stroke="#222" fill="#222"/>
<rect x="1364" y="818" width="9" height="7" fill="#333"/><path d="M1366 818V816a2.500 2.500 0 0 1 5 0V818" stroke="#444" fill="none" stroke-width="1.500"/>
<text x="1425" y="822" textLength="16" lengthAdjust="spacingAndGlyphs">Fill:</text>
<rect x="1444" y="811" width="41" height="18" fill="#fff"/><rect x="1485.500" y="810.500" width="17" height="19" fill="#d2d6e0" stroke="#aaa"/><path d="M1492 816.500L1495.500 820L1492 823.500Z" fill="#5f7abd"/>
<text x="1451" y="824" textLength="28" lengthAdjust="spacingAndGlyphs">100%</text>
<rect x="1272" y="832" width="304" height="1" fill="#999"/>
<rect x="1294" y="833" width="1" height="120" fill="#aaa"/>
<path d="M1295 848.500H1561M1295 875H1561M1295 901H1561M1295 927H1561M1270 953H1561" stroke="#9a9a9a"/>
<rect x="1562" y="833" width="16" height="146" fill="#efefef"/>
<path d="M1566 846L1570 842L1574 846Z" fill="#444"/>
<rect x="1563.500" y="941.500" width="11" height="33" rx="1" fill="#e2e2e2" stroke="#aaa"/><path d="M1565 954H1573M1565 957H1573M1565 960H1573" stroke="#777"/>
<path d="M1348 838Q1354 833 1360 838Q1354 843 1348 838Z" fill="#777"/><circle cx="1354" cy="838" r="1.700" fill="#444"/>
<text x="1366" y="843" textLength="65" lengthAdjust="spacingAndGlyphs">Color Overlay</text>
<g fill="none" stroke="#aaa"><rect x="1275.500" y="853.500" width="15" height="15"/><rect x="1275.500" y="879.500" width="15" height="15"/><rect x="1275.500" y="905.500" width="15" height="15"/><rect x="1275.500" y="931.500" width="15" height="15"/><rect x="1275.500" y="957.500" width="15" height="15"/></g>
<!-- row black & white -->
<circle cx="1329" cy="861" r="5.500" fill="#e8e8e8" stroke="#555"/><path d="M1325 865A5.500 5.500 0 0 1 1333 857Z" fill="#333"/>
<rect x="1350.500" y="855.500" width="5" height="11" rx="2.500" fill="#eee" stroke="#555"/><rect x="1352" y="858" width="2" height="6" fill="#888"/>
<rect x="1361" y="852" width="32" height="19" fill="#000"/><rect x="1386" y="860" width="2" height="2" fill="#fff"/><rect x="1385" y="864" width="3" height="2" fill="#fff"/><rect x="1386" y="867" width="2" height="2" fill="#fff"/>
<text x="1400" y="866" textLength="74" lengthAdjust="spacingAndGlyphs">Black &amp; White 1</text>
<!-- row photo filter -->
<circle cx="1329" cy="887" r="5.500" fill="#e8e8e8" stroke="#555"/><path d="M1325 891A5.500 5.500 0 0 1 1333 883Z" fill="#333"/>
<rect x="1350.500" y="881.500" width="5" height="11" rx="2.500" fill="#eee" stroke="#555"/><rect x="1352" y="884" width="2" height="6" fill="#888"/>
<rect x="1361.500" y="878.500" width="31" height="18" fill="#fff" stroke="#000"/>
<text x="1400" y="892" textLength="64" lengthAdjust="spacingAndGlyphs">Photo Filter 1</text>
<!-- row layer 2 -->
<rect x="1314.500" y="904.500" width="31" height="18" fill="url(#chk)" stroke="#000"/><rect x="1337" y="909" width="4" height="10" fill="#8a7a6c"/><circle cx="1339" cy="908" r="1.500" fill="#222"/>
<rect x="1350.500" y="907.500" width="5" height="11" rx="2.500" fill="#eee" stroke="#555"/><rect x="1352" y="910" width="2" height="6" fill="#888"/>
<rect x="1361.500" y="904.500" width="31" height="18" fill="#fff" stroke="#000"/><circle cx="1387" cy="914" r="4" fill="#000"/>
<text x="1400" y="918" textLength="37" lengthAdjust="spacingAndGlyphs">Layer 2</text>
<!-- row layer 5 -->
<rect x="1314.500" y="930.500" width="31" height="18" fill="url(#chk)" stroke="#000"/><path d="M1336 948L1339 936L1342 933L1344 948Z" fill="#1d1014"/><path d="M1337 948L1340 942L1343 948Z" fill="#6a1520"/>
<text x="1353" y="944" textLength="36" lengthAdjust="spacingAndGlyphs">Layer 5</text>
<!-- row layer 13 -->
<rect x="1295" y="953" width="266" height="26" fill="#3399ff"/>
<path d="M1277 965Q1283 958 1289 965Q1283 971 1277 965Z" fill="#222"/><circle cx="1283" cy="965" r="2.500" fill="#111"/>
<rect x="1296" y="954" width="36" height="24" fill="#fff"/>
<path d="M1297 963V955H1307M1321 955H1331V963M1331 969V977H1321M1307 977H1297V969" stroke="#000" stroke-width="2" fill="none"/>
<rect x="1299.500" y="957.500" width="29" height="17" fill="url(#chk)" stroke="#000"/><rect x="1311" y="961" width="6" height="8" fill="#777"/><rect x="1311.500" y="969" width="5" height="5" fill="#8a7a6c"/><circle cx="1314" cy="959" r="1.800" fill="#222"/>
<text class="b" x="1338" y="970" textLength="49" lengthAdjust="spacingAndGlyphs" style="fill:#fff">Layer 13</text>
</svg>
</body></html>
